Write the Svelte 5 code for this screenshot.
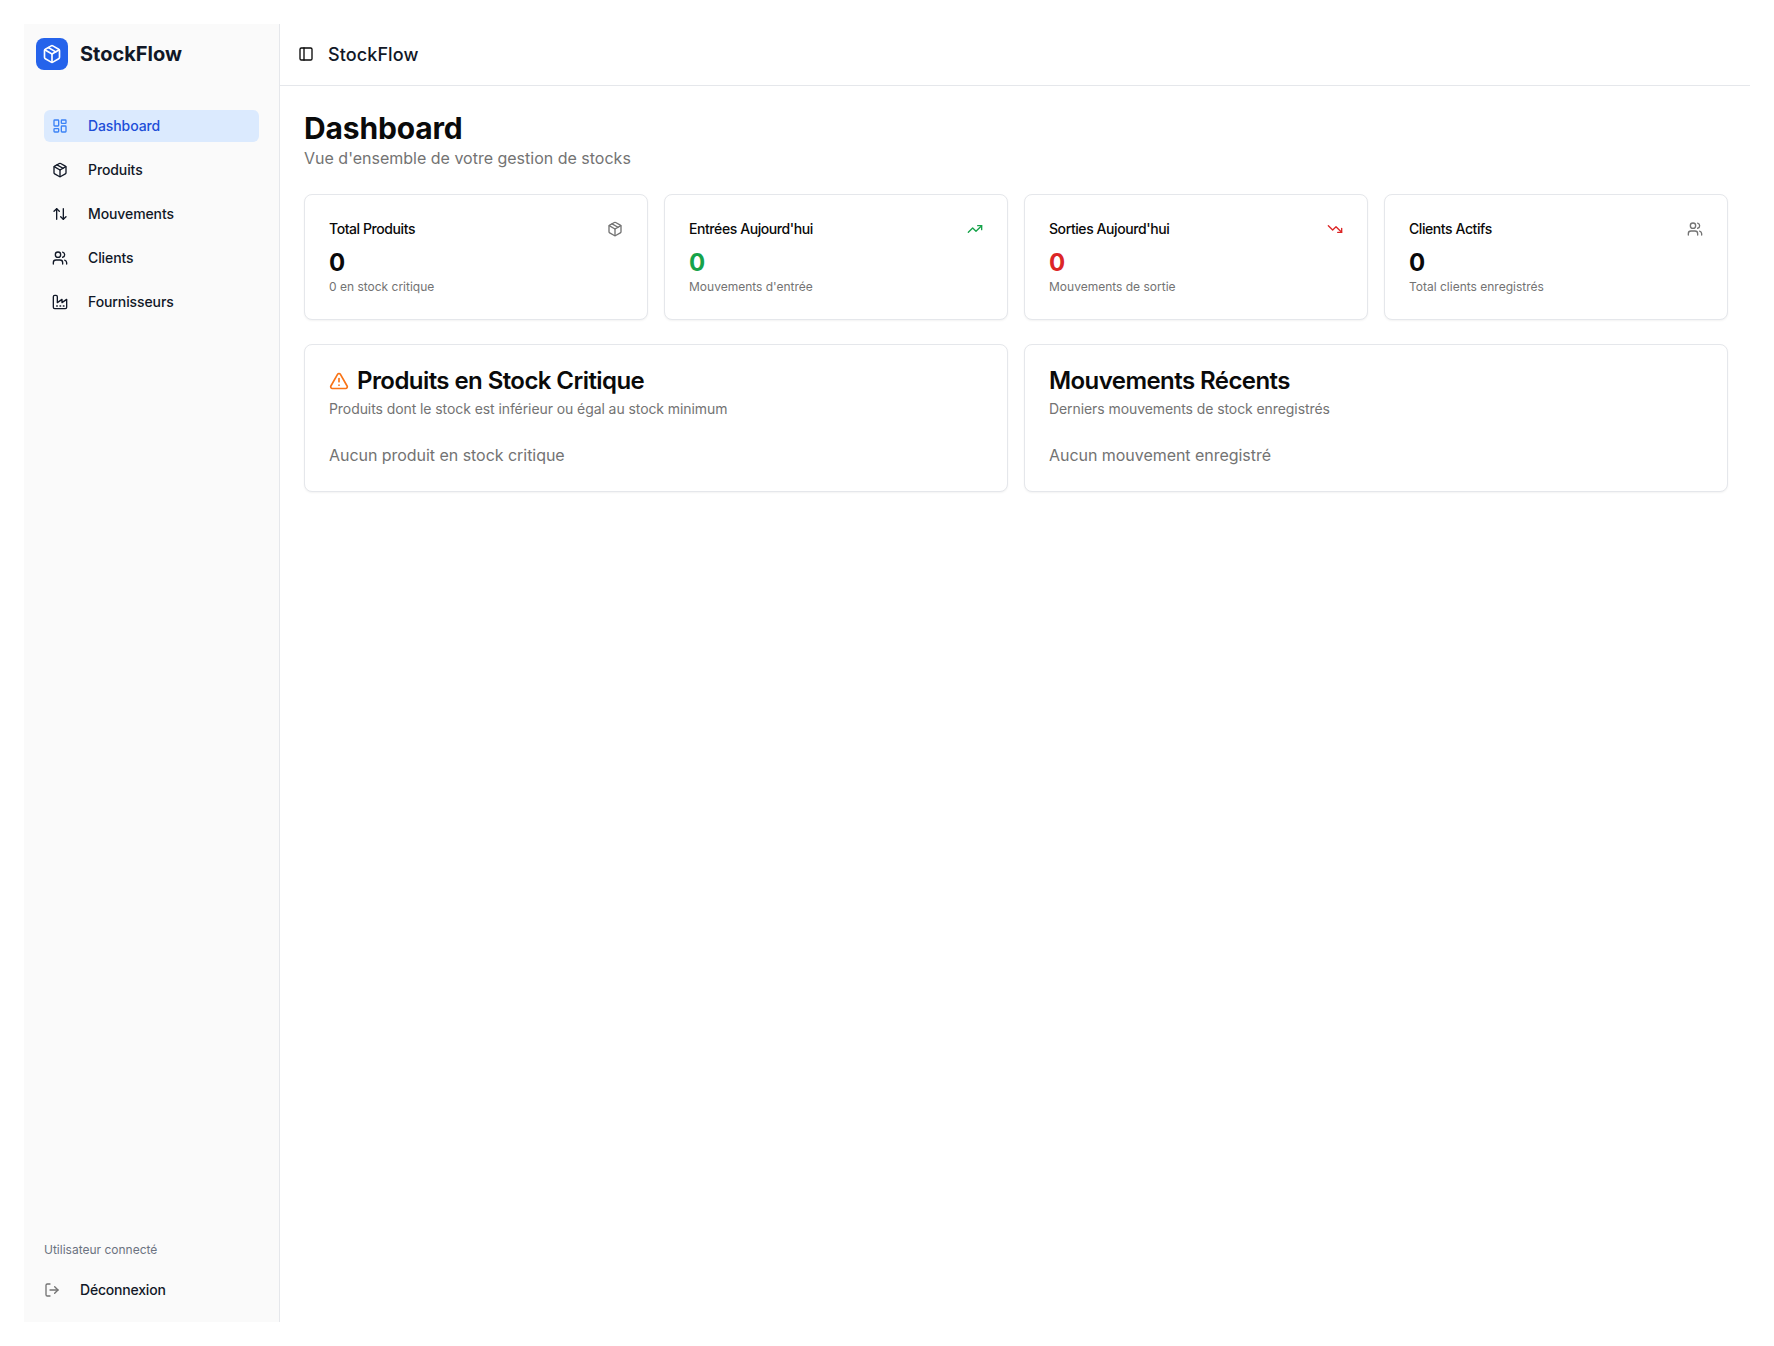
<script>
  const icons = {
    package: ['M11 21.73a2 2 0 0 0 2 0l7-4A2 2 0 0 0 21 16V8a2 2 0 0 0-1-1.73l-7-4a2 2 0 0 0-2 0l-7 4A2 2 0 0 0 3 8v8a2 2 0 0 0 1 1.73z', 'M12 22V12', 'M3.29 7 12 12l8.71-5', 'm7.5 4.27 9 5.15'],
    arrows: ['m21 16-4 4-4-4', 'M17 20V4', 'm3 8 4-4 4 4', 'M7 4v16'],
    users: ['M16 21v-2a4 4 0 0 0-4-4H6a4 4 0 0 0-4 4v2', 'M16 3.128a4 4 0 0 1 0 7.744', 'M22 21v-2a4 4 0 0 0-3-3.87', 'M13 7a4 4 0 1 1-8 0 4 4 0 0 1 8 0z'],
    factory: ['M2 20a2 2 0 0 0 2 2h16a2 2 0 0 0 2-2V8l-7 5V8l-7 5V4a2 2 0 0 0-2-2H4a2 2 0 0 0-2 2z', 'M17 18h1', 'M12 18h1', 'M7 18h1'],
    logout: ['m16 17 5-5-5-5', 'M21 12H9', 'M9 21H5a2 2 0 0 1-2-2V5a2 2 0 0 1 2-2h4'],
    panel: ['M5 3h14a2 2 0 0 1 2 2v14a2 2 0 0 1-2 2H5a2 2 0 0 1-2-2V5a2 2 0 0 1 2-2z', 'M9 3v18'],
    up: ['M16 7h6v6', 'm22 7-8.5 8.5-5-5L2 17'],
    down: ['M16 17h6v-6', 'm22 17-8.5-8.5-5 5L2 7'],
    alert: ['m21.73 18-8-14a2 2 0 0 0-3.48 0l-8 14A2 2 0 0 0 4 21h16a2 2 0 0 0 1.73-3', 'M12 9v4', 'M12 17h.01'],
    dashboard: ['M4 3h5a1 1 0 0 1 1 1v7a1 1 0 0 1-1 1H4a1 1 0 0 1-1-1V4a1 1 0 0 1 1-1z', 'M15 3h5a1 1 0 0 1 1 1v3a1 1 0 0 1-1 1h-5a1 1 0 0 1-1-1V4a1 1 0 0 1 1-1z', 'M15 12h5a1 1 0 0 1 1 1v7a1 1 0 0 1-1 1h-5a1 1 0 0 1-1-1v-7a1 1 0 0 1 1-1z', 'M4 16h5a1 1 0 0 1 1 1v3a1 1 0 0 1-1 1H4a1 1 0 0 1-1-1v-3a1 1 0 0 1 1-1z']
  };
  const nav = [
    { label: 'Dashboard', icon: 'dashboard', active: true },
    { label: 'Produits', icon: 'package' },
    { label: 'Mouvements', icon: 'arrows' },
    { label: 'Clients', icon: 'users' },
    { label: 'Fournisseurs', icon: 'factory' }
  ];
  const stats = [
    { title: 'Total Produits', icon: 'package', iconClass: 'muted', value: '0', valueClass: '', sub: '0 en stock critique' },
    { title: "Entrées Aujourd'hui", icon: 'up', iconClass: 'green', value: '0', valueClass: 'green', sub: "Mouvements d'entrée" },
    { title: "Sorties Aujourd'hui", icon: 'down', iconClass: 'red', value: '0', valueClass: 'red', sub: 'Mouvements de sortie' },
    { title: 'Clients Actifs', icon: 'users', iconClass: 'muted', value: '0', valueClass: '', sub: 'Total clients enregistrés' }
  ];
</script>

{#snippet icon(name, cls = '')}
  <svg class={'ic ' + cls} viewBox="0 0 24 24" fill="none" stroke="currentColor" stroke-width="2" stroke-linecap="round" stroke-linejoin="round" aria-hidden="true">
    {#each icons[name] as d}<path {d} />{/each}
  </svg>
{/snippet}

<div class="page">
  <aside class="sidebar">
    <div class="brand">
      <div class="logo">{@render icon('package', 'logo-ic')}</div>
      <span class="brand-name">StockFlow</span>
    </div>
    <nav class="nav">
      {#each nav as item}
        <div class="nav-item" class:active={item.active}>
          {@render icon(item.icon)}
          <span>{item.label}</span>
        </div>
      {/each}
    </nav>
    <div class="side-foot">
      <div class="user">Utilisateur connecté</div>
      <div class="logout">
        {@render icon('logout', 'muted')}
        <span>Déconnexion</span>
      </div>
    </div>
  </aside>

  <div class="main">
    <header class="topbar">
      {@render icon('panel')}
      <span class="top-title">StockFlow</span>
    </header>
    <main class="content">
      <h1>Dashboard</h1>
      <p class="lead">Vue d'ensemble de votre gestion de stocks</p>

      <section class="stats">
        {#each stats as s}
          <div class="card stat">
            <div class="stat-head">
              <span class="stat-title">{s.title}</span>
              {@render icon(s.icon, s.iconClass)}
            </div>
            <div class={'stat-value ' + s.valueClass}>{s.value}</div>
            <div class="stat-sub">{s.sub}</div>
          </div>
        {/each}
      </section>

      <section class="panels">
        <div class="card panel">
          <h2>{@render icon('alert', 'orange')}Produits en Stock Critique</h2>
          <p class="desc">Produits dont le stock est inférieur ou égal au stock minimum</p>
          <p class="empty">Aucun produit en stock critique</p>
        </div>
        <div class="card panel">
          <h2>Mouvements Récents</h2>
          <p class="desc">Derniers mouvements de stock enregistrés</p>
          <p class="empty">Aucun mouvement enregistré</p>
        </div>
      </section>
    </main>
  </div>
</div>

<style>
  :global(body) {
    margin: 0;
    background: #fff;
    font-family: Inter, "Liberation Sans", sans-serif;
    color: #0a0a0a;
  }
  .page {
    box-sizing: border-box;
    height: 1346px;
    padding: 24px;
    display: flex;
  }
  .ic {
    width: 16px;
    height: 16px;
    flex: none;
    display: block;
  }
  .sidebar {
    box-sizing: border-box;
    width: 256px;
    flex: none;
    background: #fafafa;
    border-right: 1px solid #e5e7eb;
    display: flex;
    flex-direction: column;
  }
  .brand {
    display: flex;
    align-items: center;
    gap: 12px;
    padding: 14px 12px 0;
    height: 32px;
  }
  .logo {
    width: 32px;
    height: 32px;
    border-radius: 8px;
    background: #2563eb;
    color: #fff;
    display: flex;
    align-items: center;
    justify-content: center;
  }
  .logo :global(.logo-ic) {
    width: 20px;
    height: 20px;
  }
  .brand-name {
    font-size: 20px;
    font-weight: 700;
    color: #111827;
  }
  .nav {
    margin-top: 40px;
    padding: 0 20px;
    display: flex;
    flex-direction: column;
    gap: 12px;
  }
  .nav-item {
    height: 32px;
    padding: 0 8px;
    border-radius: 6px;
    display: flex;
    align-items: center;
    gap: 20px;
    font-size: 14px;
    font-weight: 500;
    letter-spacing: -0.1px;
    color: #111827;
  }
  .nav-item span {
    margin-top: -1px;
  }
  .nav-item.active {
    background: #dbeafe;
    color: #1d4ed8;
  }
  .nav-item.active .ic {
    color: #3b82f6;
  }
  .side-foot {
    margin-top: auto;
    padding: 0 20px 16px;
  }
  .user {
    font-size: 12px;
    line-height: 16px;
    color: #6b7280;
  }
  .logout {
    height: 32px;
    margin-top: 16px;
    display: flex;
    align-items: center;
    gap: 20px;
    font-size: 14px;
    font-weight: 500;
    letter-spacing: -0.2px;
    color: #111827;
  }
  .logout span {
    margin-top: -1px;
  }
  .muted {
    color: #737373;
  }
  .green {
    color: #16a34a;
  }
  .red {
    color: #dc2626;
  }
  .orange {
    color: #f97316;
  }
  .main {
    flex: 1;
    min-width: 0;
    display: flex;
    flex-direction: column;
  }
  .topbar {
    box-sizing: border-box;
    height: 62px;
    border-bottom: 1px solid #e5e7eb;
    padding: 0 18px;
    display: flex;
    align-items: center;
    gap: 14px;
  }
  .topbar .ic {
    margin-bottom: 1px;
  }
  .top-title {
    font-size: 18px;
    font-weight: 500;
    letter-spacing: 0.1px;
    margin-bottom: 1px;
    color: #111827;
  }
  .content {
    padding: 24px 22px 24px 24px;
  }
  h1 {
    margin: 0;
    font-size: 30px;
    line-height: 36px;
    font-weight: 700;
    letter-spacing: -0.15px;
    color: #0a0a0a;
  }
  .lead {
    margin: 0;
    font-size: 16px;
    line-height: 24px;
    color: #737373;
  }
  .stats {
    margin-top: 24px;
    display: grid;
    grid-template-columns: repeat(4, 1fr);
    gap: 16px;
  }
  .card {
    box-sizing: border-box;
    background: #fff;
    border: 1px solid #e5e7eb;
    border-radius: 8px;
    box-shadow: 0 1px 2px rgba(0, 0, 0, 0.05);
    padding: 24px;
  }
  .stat-head {
    display: flex;
    align-items: center;
    justify-content: space-between;
    height: 20px;
    margin-bottom: 8px;
  }
  .stat-title {
    font-size: 14px;
    line-height: 20px;
    font-weight: 500;
    letter-spacing: -0.42px;
  }
  .stat-value {
    font-size: 24px;
    line-height: 32px;
    font-weight: 700;
  }
  .stat-sub {
    font-size: 12px;
    line-height: 16px;
    color: #737373;
  }
  .panels {
    margin-top: 24px;
    display: grid;
    grid-template-columns: repeat(2, 1fr);
    gap: 16px;
  }
  h2 {
    margin: 0;
    font-size: 24px;
    line-height: 24px;
    font-weight: 600;
    letter-spacing: -0.57px;
    display: flex;
    align-items: center;
    gap: 8px;
  }
  h2 .ic {
    width: 20px;
    height: 20px;
  }
  .desc {
    margin: 6px 0 0;
    font-size: 14px;
    line-height: 20px;
    letter-spacing: -0.08px;
    color: #737373;
  }
  .empty {
    margin: 24px 0 0;
    font-size: 16px;
    line-height: 24px;
    letter-spacing: -0.04px;
    color: #737373;
  }
</style>
